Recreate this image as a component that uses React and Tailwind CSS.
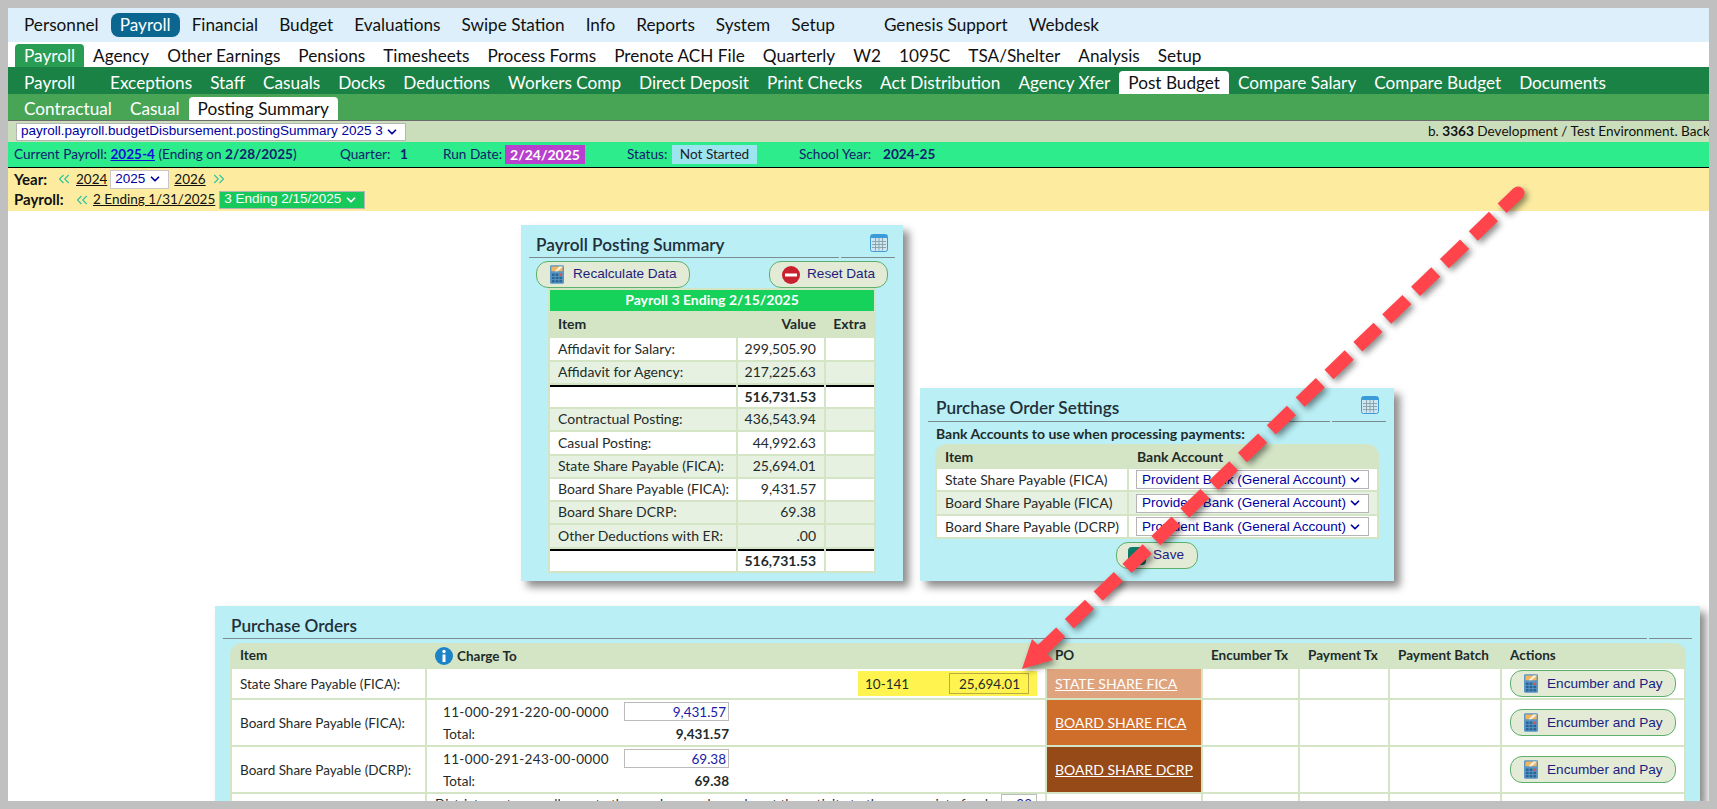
import { ChevronDown, ChevronsLeft, ChevronsRight } from "lucide-react";

const topNav = ["Personnel", "Payroll", "Financial", "Budget", "Evaluations", "Swipe Station", "Info", "Reports", "System", "Setup"];
const subNav = ["Payroll", "Agency", "Other Earnings", "Pensions", "Timesheets", "Process Forms", "Prenote ACH File", "Quarterly", "W2", "1095C", "TSA/Shelter", "Analysis", "Setup"];
const payrollNav = ["Exceptions", "Staff", "Casuals", "Docks", "Deductions", "Workers Comp", "Direct Deposit", "Print Checks", "Act Distribution", "Agency Xfer", "Post Budget", "Compare Salary", "Compare Budget", "Documents"];

const summaryRows = [
  { label: "Affidavit for Salary:", value: "299,505.90", h: "h-[22px]", bg: "bg-white" },
  { label: "Affidavit for Agency:", value: "217,225.63", h: "h-[21px]", bg: "bg-[#e6f1e1]" },
  { label: "", value: "516,731.53", h: "h-[22px]", bg: "bg-white", total: true },
  { label: "Contractual Posting:", value: "436,543.94", h: "h-[21px]", bg: "bg-[#e6f1e1]" },
  { label: "Casual Posting:", value: "44,992.63", h: "h-[22px]", bg: "bg-white" },
  { label: "State Share Payable (FICA):", value: "25,694.01", h: "h-[21px]", bg: "bg-[#e6f1e1]" },
  { label: "Board Share Payable (FICA):", value: "9,431.57", h: "h-[21px]", bg: "bg-white" },
  { label: "Board Share DCRP:", value: "69.38", h: "h-[21px]", bg: "bg-[#e6f1e1]" },
  { label: "Other Deductions with ER:", value: ".00", h: "h-[22px]", bg: "bg-[#e6f1e1]" },
  { label: "", value: "516,731.53", h: "h-[22px]", bg: "bg-white", total: true },
];

function CalcIcon() {
  return (
    <svg width="14" height="19" viewBox="0 0 15 20" className="shrink-0">
      <rect x="0" y="0" width="15" height="20" rx="1.5" fill="#5a97c4" />
      <rect x="1.5" y="1.5" width="12" height="5" fill="#f3b45f" />
      <path d="M8 6.5 L13.5 2 V1.5 H10 L5 6.5Z" fill="#fff1d8" />
      <g fill="#2a6496">
        <rect x="2" y="9" width="3" height="2.5" />
        <rect x="6" y="9" width="3" height="2.5" />
        <rect x="2" y="12.5" width="3" height="2.5" />
        <rect x="6" y="12.5" width="3" height="2.5" />
        <rect x="10" y="12.5" width="3" height="2.5" />
        <rect x="2" y="16" width="3" height="2.5" />
        <rect x="6" y="16" width="3" height="2.5" />
        <rect x="10" y="16" width="3" height="2.5" />
      </g>
      <rect x="10" y="9" width="3" height="2.5" fill="#d8504f" />
    </svg>
  );
}

function GridIcon() {
  return (
    <svg width="18" height="18" viewBox="0 0 18 18" className="shrink-0">
      <rect x="0.5" y="0.5" width="17" height="17" rx="2" fill="#cfe6f2" stroke="#3a9bd8" />
      <rect x="1" y="1" width="16" height="3" fill="#3a9bd8" />
      <path d="M2 7.5H16M2 10.5H16M2 13.5H16M5.5 4V16.5M9 4V16.5M12.5 4V16.5" stroke="#8ba6ad" strokeWidth="1" />
    </svg>
  );
}

function ActionButton({ icon, label, className }) {
  return (
    <div className={`flex items-center rounded-xl border border-[#5cb06c] bg-[#e3ead6] font-[Liberation_Sans,Arial,sans-serif] text-[13.6px] text-[#1d1d80] ${className}`}>
      {icon}
      <span>{label}</span>
    </div>
  );
}

function PanelHeader({ title, wide, narrow, icon }) {
  return (
    <div className="flex">
      <div className={`border-b border-[#7d8b8e] ${wide}`}>{title}</div>
      <div className={`ml-[2px] flex justify-end border-b border-[#7d8b8e] ${narrow}`}>{icon}</div>
    </div>
  );
}

function SelectBox({ label, className }) {
  return (
    <div className={`flex items-center justify-between whitespace-nowrap font-[Liberation_Sans,Arial,sans-serif] ${className}`}>
      <span>{label}</span>
      <ChevronDown size={14} strokeWidth={3} className="shrink-0" />
    </div>
  );
}

function PostingSummary() {
  return (
    <div className="h-[356px] w-[382px] bg-[#b9eff5] pl-2 pt-[9px] shadow-[6px_6px_8px_rgba(0,0,0,0.45)]">
      <PanelHeader
        wide="h-[24px] w-[310px] pl-[7px] text-[17.2px] leading-[22px] font-semibold text-[#22303a]"
        narrow="h-[24px] w-[54px] pr-[7px]"
        title="Payroll Posting Summary"
        icon={<GridIcon />}
      />
      <div className="ml-[7px] mt-[3px] flex w-[352px] justify-between">
        <ActionButton className="h-[27px] w-[154px] pl-[13px]" icon={<span className="mr-[9px]"><CalcIcon /></span>} label="Recalculate Data" />
        <ActionButton
          className="h-[27px] w-[119px] pl-3"
          icon={
            <svg width="18" height="18" viewBox="0 0 18 18" className="mr-[7px]">
              <circle cx="9" cy="9" r="9" fill="#c9202f" />
              <rect x="3" y="7.5" width="12" height="3" fill="#fff" />
            </svg>
          }
          label="Reset Data"
        />
      </div>
      <table className="ml-[19px] table-fixed border-separate border-spacing-[2px] bg-[#d4e5c5] text-sm text-[#1f2b2b]">
        <colgroup>
          <col className="w-[186px]" />
          <col className="w-[86px]" />
          <col className="w-[48px]" />
        </colgroup>
        <tbody>
          <tr>
            <td colSpan={3} className="h-[21px] bg-[#16d25b] p-0 pb-[1px] text-center font-bold leading-none text-white">Payroll 3 Ending 2/15/2025</td>
          </tr>
          <tr className="font-bold">
            <td className="h-[23px] p-0 pb-[2px] pl-2 leading-none">Item</td>
            <td className="p-0 pb-[2px] pr-2 text-right leading-none">Value</td>
            <td className="p-0 pb-[2px] pr-2 text-right leading-none">Extra</td>
          </tr>
          {summaryRows.map((row, i) => {
            const line = row.total ? "border-t-2 border-black" : "";
            return (
              <tr key={i} className={row.bg}>
                <td className={`p-0 pb-[1px] pl-2 leading-none ${row.h} ${line}`}>{row.label}</td>
                <td className={`p-0 pb-[1px] pr-2 text-right leading-none ${row.total ? "font-bold" : ""} ${line}`}>{row.value}</td>
                <td className={`p-0 ${line}`}></td>
              </tr>
            );
          })}
        </tbody>
      </table>
    </div>
  );
}

function PoSettings() {
  const rows = [
    { label: "State Share Payable (FICA)", bg: "bg-white", h: "h-[21px]" },
    { label: "Board Share Payable (FICA)", bg: "bg-[#e6f1e1]", h: "h-[22px]" },
    { label: "Board Share Payable (DCRP)", bg: "bg-white", h: "h-[21px]" },
  ];
  return (
    <div className="h-[193px] w-[474px] bg-[#b9eff5] pl-2 pt-[8px] shadow-[6px_6px_8px_rgba(0,0,0,0.45)]">
      <PanelHeader
        wide="h-[26px] w-[402px] pl-2 text-[17.2px] leading-[24px] font-semibold text-[#22303a]"
        narrow="h-[26px] w-[54px] pr-[7px]"
        title="Purchase Order Settings"
        icon={<GridIcon />}
      />
      <p className="ml-2 mt-[2px] h-[20px] text-sm leading-[20px] font-bold text-[#1f2b2b]">Bank Accounts to use when processing payments:</p>
      <div className="ml-[7px] w-[444px] overflow-hidden rounded-t-xl bg-[#d4e5c5]">
        <table className="table-fixed border-separate border-spacing-[2px] text-sm text-[#1f2b2b]">
          <colgroup>
            <col className="w-[190px]" />
            <col className="w-[248px]" />
          </colgroup>
          <tbody>
            <tr className="font-bold">
              <td className="h-[21px] p-0 pl-2">Item</td>
              <td className="p-0 pl-2">Bank Account</td>
            </tr>
            {rows.map((row) => (
              <tr key={row.label} className={row.bg}>
                <td className={`p-0 pl-2 leading-none ${row.h}`}>{row.label}</td>
                <td className="p-0 pl-[7px]">
                  <SelectBox
                    label="Provident Bank (General Account)"
                    className="h-[19px] w-[233px] border border-[#b5b5b5] bg-white pl-[5px] pr-[6px] text-[13.5px] text-[#0000a0]"
                  />
                </td>
              </tr>
            ))}
          </tbody>
        </table>
      </div>
      <ActionButton
        className="ml-[188px] mt-[3px] h-[27px] w-[82px] pl-[11px]"
        icon={<span className="mr-[7px] block h-[18px] w-[18px] rounded-sm bg-[#0e7a6a]"></span>}
        label="Save"
      />
    </div>
  );
}

function AmountLine({ account, amount }) {
  return (
    <div className="ml-4 w-[286px]">
      <div className="flex h-[22px] items-center justify-between">
        <span className="tracking-[0.35px]">{account}</span>
        <span className="flex h-[19px] w-[105px] items-center justify-end border border-[#bbbbbb] pr-[2px] text-[#1a1aa8]">{amount}</span>
      </div>
      <div className="mt-[1px] flex h-[21px] items-center justify-between">
        <span>Total:</span>
        <span className="font-bold">{amount}</span>
      </div>
    </div>
  );
}

function PurchaseOrders() {
  const rows = [
    {
      item: "State Share Payable (FICA):",
      h: "h-[29px]",
      po: "STATE SHARE FICA",
      poBg: "bg-[#dfa37e]",
      charge: (
        <div className="ml-auto mr-2 flex h-[25px] w-[179px] items-center bg-[#fff44f] pl-[7px]">
          <span>10-141</span>
          <span className="ml-auto mr-2 flex h-[21px] w-[80px] items-center justify-end border border-[#b9ab3f] pr-2">25,694.01</span>
        </div>
      ),
    },
    { item: "Board Share Payable (FICA):", h: "h-[45px]", po: "BOARD SHARE FICA", poBg: "bg-[#cf6d2b]", charge: <AmountLine account="11-000-291-220-00-0000" amount="9,431.57" /> },
    { item: "Board Share Payable (DCRP):", h: "h-[45px]", po: "BOARD SHARE DCRP", poBg: "bg-[#964a18]", charge: <AmountLine account="11-000-291-243-00-0000" amount="69.38" /> },
  ];
  return (
    <div className="ml-[207px] mt-[25px] h-[195px] w-[1485px] bg-[#b9eff5] pl-2 pt-[9px] shadow-[6px_6px_8px_rgba(0,0,0,0.45)]">
      <PanelHeader
        wide="h-[24px] w-[1424px] pl-2 text-[17.2px] leading-[22px] font-semibold text-[#22303a]"
        narrow="h-[24px] w-[43px]"
        title="Purchase Orders"
      />
      <div className="ml-[7px] mt-[4px] w-[1456px] overflow-hidden rounded-t-xl bg-[#d4e5c5]">
        <table className="table-fixed border-separate border-spacing-[2px] text-[13.5px] text-[#1f2b2b]">
          <colgroup>
            <col className="w-[193px]" />
            <col className="w-[618px]" />
            <col className="w-[154px]" />
            <col className="w-[95px]" />
            <col className="w-[88px]" />
            <col className="w-[110px]" />
            <col className="w-[182px]" />
          </colgroup>
          <tbody>
            <tr className="font-bold">
              <td className="h-[22px] p-0 pb-[2px] pl-2">Item</td>
              <td className="p-0 pl-2">
                <div className="flex items-center gap-1">
                  <svg width="18" height="18" viewBox="0 0 18 18">
                    <circle cx="9" cy="9" r="9" fill="#1c83c9" />
                    <circle cx="9" cy="4.5" r="1.7" fill="#fff" />
                    <rect x="7.5" y="7.5" width="3" height="7.5" fill="#fff" />
                  </svg>
                  <span>Charge To</span>
                </div>
              </td>
              <td className="p-0 pb-[2px] pl-2">PO</td>
              <td className="p-0 pb-[2px] pl-2">Encumber Tx</td>
              <td className="p-0 pb-[2px] pl-2">Payment Tx</td>
              <td className="p-0 pb-[2px] pl-2">Payment Batch</td>
              <td className="p-0 pb-[2px] pl-2">Actions</td>
            </tr>
            {rows.map((row) => (
              <tr key={row.item} className="bg-white">
                <td className={`p-0 pl-2 ${row.h}`}>{row.item}</td>
                <td className="p-0">{row.charge}</td>
                <td className={`p-0 pl-2 text-sm text-white underline ${row.poBg}`}>{row.po}</td>
                <td className="p-0"></td>
                <td className="p-0"></td>
                <td className="p-0"></td>
                <td className="p-0 pl-2">
                  <ActionButton className="h-[27px] w-[166px] pl-[13px]" icon={<span className="mr-[9px]"><CalcIcon /></span>} label="Encumber and Pay" />
                </td>
              </tr>
            ))}
            <tr className="bg-white">
              <td className="h-[30px] p-0"></td>
              <td className="p-0 pl-2 align-top">
                <div className="flex items-start">
                  <span className="mt-[3px] leading-[14px]">District must manually create the purchase order and post the activity to the appropriate fund</span>
                  <span className="ml-auto mr-2 flex h-[19px] w-[36px] items-center justify-end border border-[#bbbbbb] pr-1 text-[#1a1aa8]">.00</span>
                </div>
              </td>
              <td className="p-0"></td>
              <td className="p-0"></td>
              <td className="p-0"></td>
              <td className="p-0"></td>
              <td className="p-0"></td>
            </tr>
          </tbody>
        </table>
      </div>
    </div>
  );
}

function Arrow() {
  return (
    <svg width="1717" height="809" className="pointer-events-none absolute -left-2 -top-2 drop-shadow-[3px_3px_3px_rgba(0,0,0,0.45)]">
      <circle cx="1518" cy="193" r="6.5" fill="#ff444c" />
      <line x1="1518" y1="193" x2="1042" y2="650" stroke="#ff444c" strokeWidth="13" strokeDasharray="28 12" strokeDashoffset="6" />
      <polygon points="1022,669 1032,639 1053,660" fill="#ff444c" />
    </svg>
  );
}

export default function App() {
  return (
    <div className="relative box-border h-[809px] w-[1717px] overflow-hidden border-8 border-[#c0c0c0] bg-white font-[Lato,sans-serif] text-[#111]">
      <div className="flex h-[34px] items-center gap-[3px] bg-[#dcEFFB] pl-[7px] text-[17.2px]">
        {topNav.map((label) => (
          <span key={label} className={`flex h-6 items-center rounded-lg px-[9px] ${label === "Payroll" ? "bg-[#0b6690] text-white" : ""}`}>{label}</span>
        ))}
        <span className="ml-[28px] px-[9px]">Genesis Support</span>
        <span className="px-[9px]">Webdesk</span>
      </div>
      <div className="flex h-[25px] items-end bg-white pl-[7px] text-[17.2px]">
        {subNav.map((label, i) => (
          <span key={i} className={`flex h-[23px] items-center rounded-t px-[9px] ${i === 0 ? "bg-[#2a9d55] text-white" : ""}`}>{label}</span>
        ))}
      </div>
      <div className="flex h-[27px] items-end bg-[#1b8245] pl-2 text-[17.2px] text-white">
        <span className="flex h-[23px] w-[85px] items-center pl-2">Payroll</span>
        {payrollNav.map((label) => (
          <span key={label} className={`flex h-[23px] items-center rounded-t px-[9px] ${label === "Post Budget" ? "bg-white text-[#111]" : ""}`}>{label}</span>
        ))}
      </div>
      <div className="box-content flex h-[26px] items-end border-b border-[#6b6b6b] bg-[#49a556] pl-[7px] text-[17.2px] text-white">
        <span className="flex h-[23px] items-center px-[9px]">Contractual</span>
        <span className="flex h-[23px] items-center px-[9px]">Casual</span>
        <span className="flex h-[23px] items-center rounded-t bg-white px-[9px] text-[#111]">Posting Summary</span>
      </div>
      <div className="flex h-[21px] items-center overflow-hidden whitespace-nowrap bg-[#cbdebb] pl-2 text-[13.6px]">
        <SelectBox
          label="payroll.payroll.budgetDisbursement.postingSummary 2025 3"
          className="h-[18px] w-[390px] shrink-0 border border-[#b5b5b5] bg-white pl-1 pr-[6px] text-[13.5px] text-[#0000a0]"
        />
        <span className="ml-[1022px] shrink-0">b. <b>3363</b> Development / Test Environment. Backup</span>
      </div>
      <div className="box-content flex h-[25px] items-center whitespace-nowrap border-b border-black bg-[#2dec8b] pl-[6px] text-[13.6px] text-[#12206e]">
        <span className="w-[326px]">Current Payroll: <b className="text-[#1010d8] underline">2025-4</b> (Ending on <b>2/28/2025</b>)</span>
        <span className="w-[60px]">Quarter:</span>
        <b className="w-[43px]">1</b>
        <span className="w-[62px]">Run Date:</span>
        <b className="flex h-[19px] w-[80px] items-center justify-center bg-[#b93fce] text-sm text-white">2/24/2025</b>
        <span className="ml-[42px] w-[45px]">Status:</span>
        <span className="flex h-[19px] w-[85px] items-center justify-center bg-[#9be4f0] text-[#222]">Not Started</span>
        <span className="ml-[42px] w-[84px]">School Year:</span>
        <b>2024-25</b>
      </div>
      <div className="h-[43px] bg-[#fdeca0] pl-[6px] text-[13.5px]">
        <div className="flex h-[22px] items-center">
          <b className="w-[41px] text-[15px]">Year:</b>
          <ChevronsLeft size={18} strokeWidth={1.5} className="text-[#2ec4a0]" />
          <span className="ml-[3px] underline">2024</span>
          <SelectBox label="2025" className="ml-[3px] h-[19px] w-[59px] border border-[#c8c8c8] bg-white pl-1 pr-[6px] text-[#0000a0]" />
          <span className="ml-[5px] underline">2026</span>
          <ChevronsRight size={18} strokeWidth={1.5} className="ml-[4px] text-[#2ec4a0]" />
        </div>
        <div className="flex h-[19px] items-center">
          <b className="w-[59px] text-[15px]">Payroll:</b>
          <ChevronsLeft size={18} strokeWidth={1.5} className="text-[#2ec4a0]" />
          <span className="ml-[2px] underline">2 Ending 1/31/2025</span>
          <SelectBox label="3 Ending 2/15/2025" className="ml-[4px] h-[18px] w-[146px] border border-[#b5b5b5] bg-[#17c95a] pl-1 pr-[6px] text-white" />
        </div>
      </div>
      <div className="ml-[513px] mt-[14px] flex items-end gap-[17px]">
        <PostingSummary />
        <PoSettings />
      </div>
      <PurchaseOrders />
      <Arrow />
    </div>
  );
}
